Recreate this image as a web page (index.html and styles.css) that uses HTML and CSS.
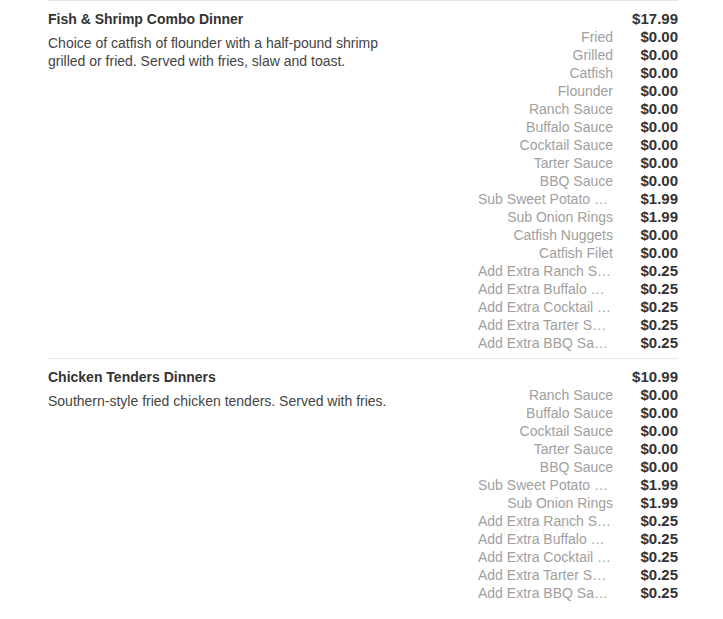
FILE: index.html
```html
<!DOCTYPE html>
<html>
<head>
<meta charset="utf-8">
<link rel="stylesheet" href="styles.css">
</head>
<body>
<div class="menu">
  <section class="item">
    <div class="info">
      <div class="name">Fish &amp; Shrimp Combo Dinner</div>
      <div class="desc">Choice of catfish of flounder with a half-pound shrimp grilled or fried. Served with fries, slaw and toast.</div>
    </div>
    <div class="prices">
      <div class="row"><span class="label"></span><span class="price">$17.99</span></div>
      <div class="row"><span class="label">Fried</span><span class="price">$0.00</span></div>
      <div class="row"><span class="label">Grilled</span><span class="price">$0.00</span></div>
      <div class="row"><span class="label">Catfish</span><span class="price">$0.00</span></div>
      <div class="row"><span class="label">Flounder</span><span class="price">$0.00</span></div>
      <div class="row"><span class="label">Ranch Sauce</span><span class="price">$0.00</span></div>
      <div class="row"><span class="label">Buffalo Sauce</span><span class="price">$0.00</span></div>
      <div class="row"><span class="label">Cocktail Sauce</span><span class="price">$0.00</span></div>
      <div class="row"><span class="label">Tarter Sauce</span><span class="price">$0.00</span></div>
      <div class="row"><span class="label">BBQ Sauce</span><span class="price">$0.00</span></div>
      <div class="row"><span class="label">Sub Sweet Potato Fries</span><span class="price">$1.99</span></div>
      <div class="row"><span class="label">Sub Onion Rings</span><span class="price">$1.99</span></div>
      <div class="row"><span class="label">Catfish Nuggets</span><span class="price">$0.00</span></div>
      <div class="row"><span class="label">Catfish Filet</span><span class="price">$0.00</span></div>
      <div class="row"><span class="label">Add Extra Ranch Sauce</span><span class="price">$0.25</span></div>
      <div class="row"><span class="label">Add Extra Buffalo Sauce</span><span class="price">$0.25</span></div>
      <div class="row"><span class="label">Add Extra Cocktail Sauce</span><span class="price">$0.25</span></div>
      <div class="row"><span class="label">Add Extra Tarter Sauce</span><span class="price">$0.25</span></div>
      <div class="row"><span class="label">Add Extra BBQ Sauce</span><span class="price">$0.25</span></div>
    </div>
  </section>
  <section class="item">
    <div class="info">
      <div class="name">Chicken Tenders Dinners</div>
      <div class="desc">Southern-style fried chicken tenders. Served with fries.</div>
    </div>
    <div class="prices">
      <div class="row"><span class="label"></span><span class="price">$10.99</span></div>
      <div class="row"><span class="label">Ranch Sauce</span><span class="price">$0.00</span></div>
      <div class="row"><span class="label">Buffalo Sauce</span><span class="price">$0.00</span></div>
      <div class="row"><span class="label">Cocktail Sauce</span><span class="price">$0.00</span></div>
      <div class="row"><span class="label">Tarter Sauce</span><span class="price">$0.00</span></div>
      <div class="row"><span class="label">BBQ Sauce</span><span class="price">$0.00</span></div>
      <div class="row"><span class="label">Sub Sweet Potato Fries</span><span class="price">$1.99</span></div>
      <div class="row"><span class="label">Sub Onion Rings</span><span class="price">$1.99</span></div>
      <div class="row"><span class="label">Add Extra Ranch Sauce</span><span class="price">$0.25</span></div>
      <div class="row"><span class="label">Add Extra Buffalo Sauce</span><span class="price">$0.25</span></div>
      <div class="row"><span class="label">Add Extra Cocktail Sauce</span><span class="price">$0.25</span></div>
      <div class="row"><span class="label">Add Extra Tarter Sauce</span><span class="price">$0.25</span></div>
      <div class="row"><span class="label">Add Extra BBQ Sauce</span><span class="price">$0.25</span></div>
    </div>
    <div class="watermark">menupix</div>
  </section>
</div>
</body>
</html>
```

FILE: styles.css
```css
html, body {
  margin: 0;
  padding: 0;
  background: #fff;
}
body {
  font-family: "Liberation Sans", Arial, sans-serif;
  color: #333;
}
.menu {
  margin-left: 48px;
  width: 630px;
}
.item {
  position: relative;
  display: flex;
  justify-content: space-between;
  border-top: 1px solid #e6e6e6;
  padding: 9px 0 6px 0;
}
.info {
  width: 345px;
}
.name {
  font-size: 14px;
  font-weight: bold;
  line-height: 18px;
  color: #333;
}
.desc {
  margin-top: 6px;
  font-size: 14px;
  line-height: 18px;
  color: #444;
}
.prices {
  display: flex;
  flex-direction: column;
}
.row {
  display: flex;
  align-items: center;
  height: 18px;
}
.label {
  width: 135px;
  font-size: 14px;
  line-height: 18px;
  color: #a0a0a0;
  text-align: right;
  white-space: nowrap;
  overflow: hidden;
  text-overflow: ellipsis;
}
.price {
  width: 65px;
  font-size: 15px;
  font-weight: bold;
  line-height: 18px;
  text-align: right;
  color: #333;
}
.watermark {
  position: absolute;
  left: 447px;
  top: 158px;
  font-size: 22px;
  letter-spacing: 1px;
  color: rgba(0, 0, 0, 0.04);
  pointer-events: none;
}
```
